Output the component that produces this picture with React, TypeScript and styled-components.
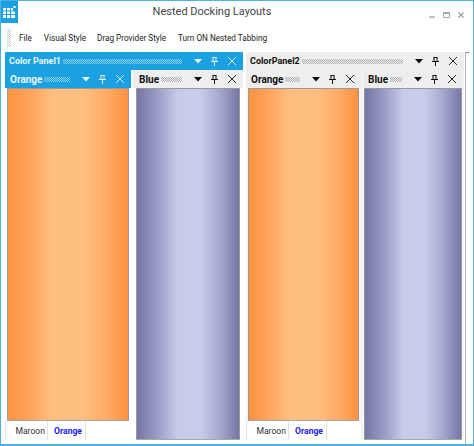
import React from 'react';
import styled, { createGlobalStyle } from 'styled-components';

const GlobalStyle = createGlobalStyle`
html, body { margin:0; padding:0; background:#ffffff; }
* { box-sizing:border-box; }
`

const Window = styled.div`
width:474px;
height:446px;
display:flex;
flex-direction:column;
position:relative;
background:#ffffff;
border:1px solid #4fb2e4;
border-bottom-width:2px;
font-family:Roboto, "Liberation Sans", sans-serif;
overflow:hidden;
`
const TitleBar = styled.div`
height:21px;
display:flex;
justify-content:center;
align-items:center;
position:relative;
`
const Title = styled.div`
font-size:11px;
color:#444444;
margin-left:-50px;
`
const AppIcon = styled.div`
position:absolute;
left:0;
top:0;
width:17px;
height:22px;
background:#1ba1e2;
display:flex;
align-items:center;
justify-content:center;
`
const WindowButtons = styled.div`
position:absolute;
right:9px;
top:11px;
display:flex;
align-items:center;
gap:8px;
`
const MenuBar = styled.div`
height:30px;
display:flex;
align-items:center;
padding:2px 0 0 6px;
flex-shrink:0;
`
const Grip = styled.div`
width:4px;
height:18px;
margin-right:8px;
background:repeating-conic-gradient(#cfcfcf 0 25%, transparent 0 50%) 0 0/2px 2px;
`
const MenuItem = styled.div<{ $gap: number }>`
font-size:8.2px;
color:#222222;
margin-right:${p => p.$gap}px;
white-space:nowrap;
`
const DockArea = styled.div`
flex:1;
display:flex;
padding:0 0 4px 4px;
min-height:0;
`
const Group = styled.div<{ $w: number; $active?: boolean }>`
width:${p => p.$w}px;
display:flex;
flex-direction:column;
margin-right:${p => (p.$active ? 3 : 0)}px;
background:${p => (p.$active ? '#ffffff' : '#f4f4f4')};
`
const Caption = styled.div<{ $active?: boolean; $pad: number }>`
height:18px;
flex-shrink:0;
display:flex;
align-items:center;
background:${p => (p.$active ? '#1ba1e2' : '#eeeeee')};
color:${p => (p.$active ? '#e8f6fd' : '#111111')};
padding:0 6px 0 ${p => p.$pad}px;
`
const CaptionText = styled.span<{ $size?: number }>`
font-size:${p => p.$size || 9}px;
font-weight:700;
white-space:nowrap;
`
const Dots = styled.div<{ $light?: boolean }>`
flex:1;
height:5px;
margin:0 12px 0 2px;
background:repeating-conic-gradient(${p => (p.$light ? '#8fd0ef' : '#b0b0b0')} 0 25%, transparent 0 50%) 0 0/2px 2px;
`
const Buttons = styled.div`
display:flex;
align-items:center;
gap:8px;
`
const Panes = styled.div`
flex:1;
display:flex;
min-height:0;
`
const Pane = styled.div<{ $w: number; $gap: number }>`
width:${p => p.$w}px;
margin-right:${p => p.$gap}px;
display:flex;
flex-direction:column;
`
const Fill = styled.div<{ $kind: 'orange' | 'blue'; $inset: number }>`
flex:1;
margin:0 ${p => p.$inset}px;
border:1px solid #9a9a9a;
border-bottom-color:#a8a8a8;
background:${p =>
    p.$kind === 'orange'
      ? 'linear-gradient(90deg,#ff9240 0%,#ffa45c 18%,#ffbf80 38%,#ffbf80 62%,#ffab66 82%,#ff9240 100%)'
      : 'linear-gradient(90deg,#7676a6 0%,#9a9cc6 20%,#c8cce8 40%,#c8cce8 62%,#a4a6cc 82%,#7676a6 100%)'};
`
const TabStrip = styled.div`
height:19px;
flex-shrink:0;
display:flex;
background:#ffffff;
border-left:1px solid #e2e2e2;
`
const Tab = styled.div<{ $selected?: boolean; $w: number }>`
width:${p => p.$w}px;
display:flex;
align-items:center;
justify-content:flex-end;
padding-right:${p => (p.$selected ? 3 : 2)}px;
font-size:8.6px;
font-weight:${p => (p.$selected ? 700 : 400)};
color:${p => (p.$selected ? '#2222ee' : '#333333')};
border-right:1px solid #e2e2e2;
`
const Splitter = styled.div`
position:absolute;
left:464px;
top:51px;
bottom:0;
width:4px;
border-left:1px solid #b4b4b4;
border-top:1px solid #8a8a8a;
`

function CaptionButtons({ color }: { color: string }) {
  return (
    <Buttons>
      <svg width="8" height="5" viewBox="0 0 8 5"><path d="M0 0h8L4 4.5z" fill={color} /></svg>
      <svg width="9" height="9" viewBox="0 0 9 9" fill="none" stroke={color}>
        <path d="M2.5 .5h4M3 .5v4M6 .5v4M1 4.5h7M4.5 4.5V9" />
      </svg>
      <svg width="10" height="10" viewBox="0 0 10 10" fill="none" stroke={color} strokeWidth=".9">
        <path d="M1 1l8 8M9 1L1 9" />
      </svg>
    </Buttons>
  );
}

function Header({ title, active, size, pad }: { title: string; active?: boolean; size?: number; pad?: number }) {
  return (
    <Caption $active={active} $pad={pad ?? 4}>
      <CaptionText $size={size}>{title}</CaptionText>
      <Dots $light={active} />
      <CaptionButtons color={active ? '#e6f5fc' : '#111111'} />
    </Caption>
  );
}

function Tabs() {
  return (
    <TabStrip>
      <Tab $w={42}>Maroon</Tab>
      <Tab $w={38} $selected>Orange</Tab>
    </TabStrip>
  );
}

export default function App() {
  return (
    <>
      <GlobalStyle />
      <Window>
        <TitleBar>
          <AppIcon>
            <svg width="13" height="13" viewBox="0 0 13 13" fill="#ffffff">
              <path d="M0 2h3v2.5H0zM4 2h3v2.5H4zM8 2h2v2.5H8zM0 5.5h3V8H0zM4 5.5h3V8H4zM8 5.5h4V8H8zM0 9h3v3H0zM4 9h3v3H4zM8 9h4v3H8zM10.5 0h2v2h-2z" />
            </svg>
          </AppIcon>
          <Title>Nested Docking Layouts</Title>
          <WindowButtons>
            <svg width="6" height="6" viewBox="0 0 6 6"><path d="M0 5h6" stroke="#9a9a9a" strokeWidth="1.2" /></svg>
            <svg width="7" height="6" viewBox="0 0 7 6" fill="none"><path d="M.5.5h6v5h-6zM.5 1.5h6" stroke="#a8a8a8" /></svg>
            <svg width="6" height="6" viewBox="0 0 6 6"><path d="M.5.5l5 5M5.5.5l-5 5" stroke="#9a9a9a" strokeWidth="1.2" /></svg>
          </WindowButtons>
        </TitleBar>
        <MenuBar>
          <Grip />
          <MenuItem $gap={12}>File</MenuItem>
          <MenuItem $gap={11}>Visual Style</MenuItem>
          <MenuItem $gap={12}>Drag Provider Style</MenuItem>
          <MenuItem $gap={0}>Turn ON Nested Tabbing</MenuItem>
        </MenuBar>
        <DockArea>
          <Group $w={238} $active>
            <Header title="Color Panel1" active />
            <Panes>
              <Pane $w={126} $gap={2}>
                <Header title="Orange" active size={10} pad={5} />
                <Fill $kind="orange" $inset={2} />
                <Tabs />
              </Pane>
              <Pane $w={110} $gap={0}>
                <Header title="Blue" size={10} pad={6} />
                <Fill $kind="blue" $inset={3} />
              </Pane>
            </Panes>
          </Group>
          <Group $w={218}>
            <Header title="ColorPanel2" />
            <Panes>
              <Pane $w={115} $gap={2}>
                <Header title="Orange" size={10} pad={5} />
                <Fill $kind="orange" $inset={2} />
                <Tabs />
              </Pane>
              <Pane $w={100} $gap={0}>
                <Header title="Blue" size={10} pad={5} />
                <Fill $kind="blue" $inset={1} />
              </Pane>
            </Panes>
          </Group>
        </DockArea>
        <Splitter />
      </Window>
    </>
  );
}
